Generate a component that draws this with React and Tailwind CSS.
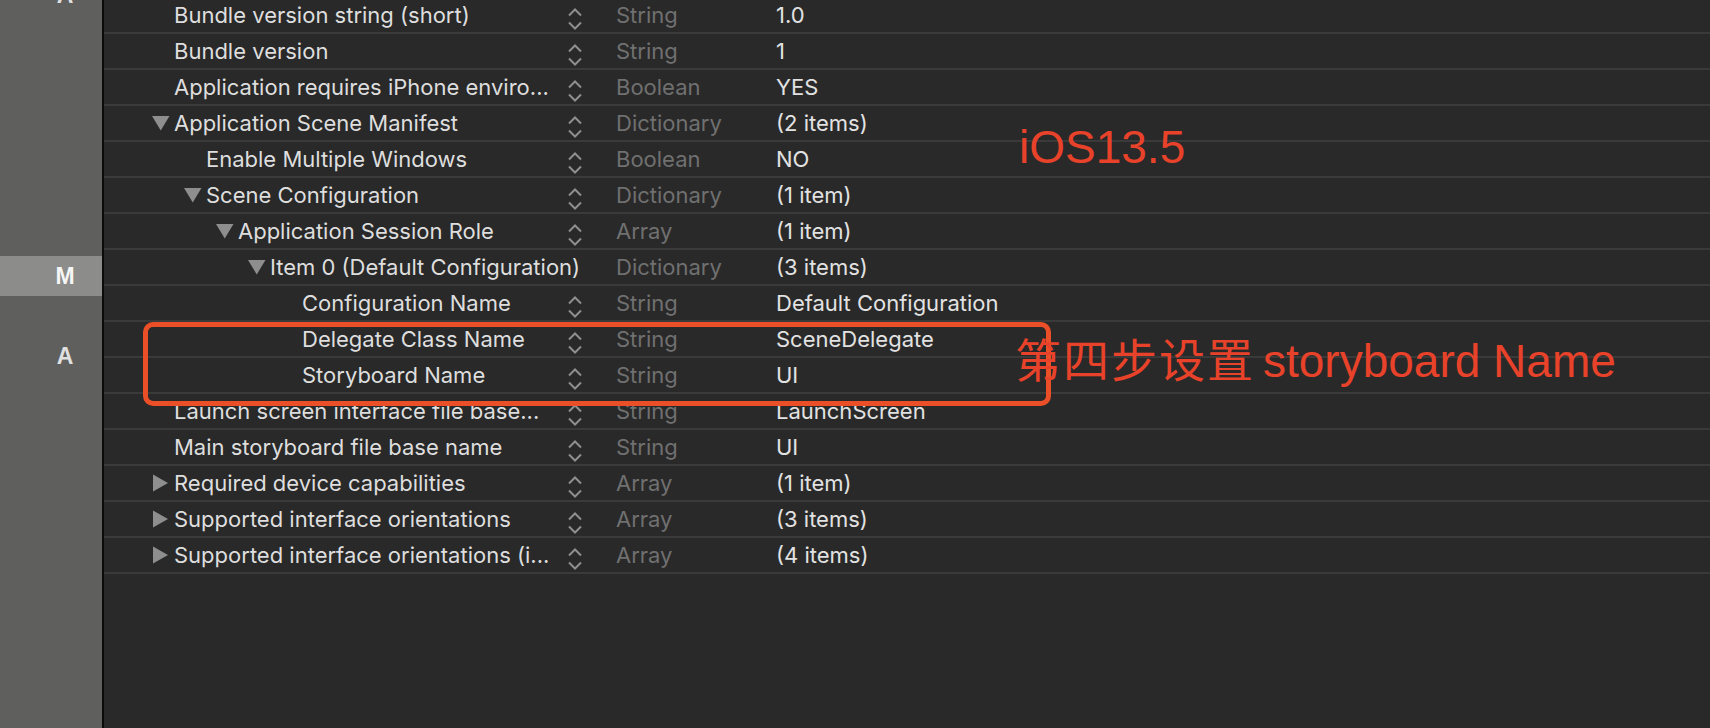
const rows = [
  { level: 0, key: "Bundle version string (short)", type: "String", value: "1.0" },
  { level: 0, key: "Bundle version", type: "String", value: "1" },
  { level: 0, key: "Application requires iPhone enviro...", type: "Boolean", value: "YES" },
  { level: 0, key: "Application Scene Manifest", type: "Dictionary", value: "(2 items)", open: true },
  { level: 1, key: "Enable Multiple Windows", type: "Boolean", value: "NO" },
  { level: 1, key: "Scene Configuration", type: "Dictionary", value: "(1 item)", open: true },
  { level: 2, key: "Application Session Role", type: "Array", value: "(1 item)", open: true },
  { level: 3, key: "Item 0 (Default Configuration)", type: "Dictionary", value: "(3 items)", open: true, noStepper: true },
  { level: 4, key: "Configuration Name", type: "String", value: "Default Configuration" },
  { level: 4, key: "Delegate Class Name", type: "String", value: "SceneDelegate" },
  { level: 4, key: "Storyboard Name", type: "String", value: "UI" },
  { level: 0, key: "Launch screen interface file base...", type: "String", value: "LaunchScreen" },
  { level: 0, key: "Main storyboard file base name", type: "String", value: "UI" },
  { level: 0, key: "Required device capabilities", type: "Array", value: "(1 item)", open: false },
  { level: 0, key: "Supported interface orientations", type: "Array", value: "(3 items)", open: false },
  { level: 0, key: "Supported interface orientations (i...", type: "Array", value: "(4 items)", open: false },
];

const indent = ["pl-[48px]", "pl-[80px]", "pl-[112px]", "pl-[144px]", "pl-[176px]"];

const Disclosure = ({ open }) =>
  open ? (
    <svg width="18" height="18" viewBox="0 0 18 18" className="block">
      <polygon points="0,2 17.5,2 8.75,16.5" fill="#8e8e8e" />
    </svg>
  ) : (
    <svg width="18" height="18" viewBox="0 0 18 18" className="block">
      <polygon points="1,0.5 16,9 1,17.5" fill="#8e8e8e" />
    </svg>
  );

const Stepper = () => (
  <svg width="16" height="24" viewBox="0 0 16 24" className="block">
    <polyline points="2,8.5 8,2.5 14,8.5" fill="none" stroke="#8f8f8f" strokeWidth="2" />
    <polyline points="2,15.5 8,21.5 14,15.5" fill="none" stroke="#8f8f8f" strokeWidth="2" />
  </svg>
);

const PlistRow = ({ row }) => (
  <div className="flex h-[36px] items-center border-b-2 border-[#3a3a3a]">
    <div
      className={`flex items-center overflow-hidden ${indent[row.level]} ${
        row.noStepper ? "w-[512px]" : "w-[450px]"
      }`}
    >
      <div className="w-[22px] shrink-0">
        {row.open !== undefined && <Disclosure open={row.open} />}
      </div>
      <span className="whitespace-nowrap text-[#dedede]">{row.key}</span>
    </div>
    {!row.noStepper && (
      <div className="w-[62px] self-end pb-[1px] pl-[13px]">
        <Stepper />
      </div>
    )}
    <div className="w-[160px] whitespace-nowrap text-[#707070]">{row.type}</div>
    <div className="flex-1 whitespace-nowrap text-[#e2e2e2]">{row.value}</div>
  </div>
);

const SideLetter = ({ letter, active, className = "" }) => (
  <div
    className={`flex h-[40px] items-center pl-[46px] ${active ? "bg-[#8c8c8b]" : ""} ${className}`}
  >
    <span
      className={`w-[38px] text-center text-[23px] font-bold leading-none ${
        active ? "text-[#f6f6f6]" : "text-[#e0e0e0]"
      }`}
    >
      {letter}
    </span>
  </div>
);

export default function App() {
  return (
    <div className="relative flex h-[728px] w-full overflow-hidden bg-[#292929] font-['Inter','Liberation_Sans',sans-serif] text-[22px]">
      <aside className="flex w-[104px] shrink-0 flex-col border-r-2 border-[#0b0b0b] bg-[#5f5f5e] font-['Liberation_Sans',sans-serif]">
        <SideLetter letter="A" className="mt-[-25px]" />
        <div className="h-[241px]" />
        <SideLetter letter="M" active />
        <div className="h-[40px]" />
        <SideLetter letter="A" />
      </aside>

      <main className="mt-[-2px] flex-1">
        {rows.map((row, i) => (
          <PlistRow key={i} row={row} />
        ))}
      </main>

      {/* annotations drawn over the screenshot */}
      <div className="absolute left-[143px] top-[322px] h-[84px] w-[908px] rounded-[10px] border-[5px] border-[#eb4f27]" />
      <div className="absolute left-[1019px] top-[124px] font-['Liberation_Sans','Noto_Sans_CJK_SC',sans-serif] text-[46px] leading-none text-[#e8432a]">
        iOS13.5
      </div>
      <div className="absolute left-[1015px] top-[338px] whitespace-nowrap font-['Liberation_Sans','Noto_Sans_CJK_SC',sans-serif] text-[46px] leading-none text-[#e8432a]">
        <span className="tracking-[2px]">第四步设置</span>
        <span className="ml-[8px]">storyboard Name</span>
      </div>
    </div>
  );
}
